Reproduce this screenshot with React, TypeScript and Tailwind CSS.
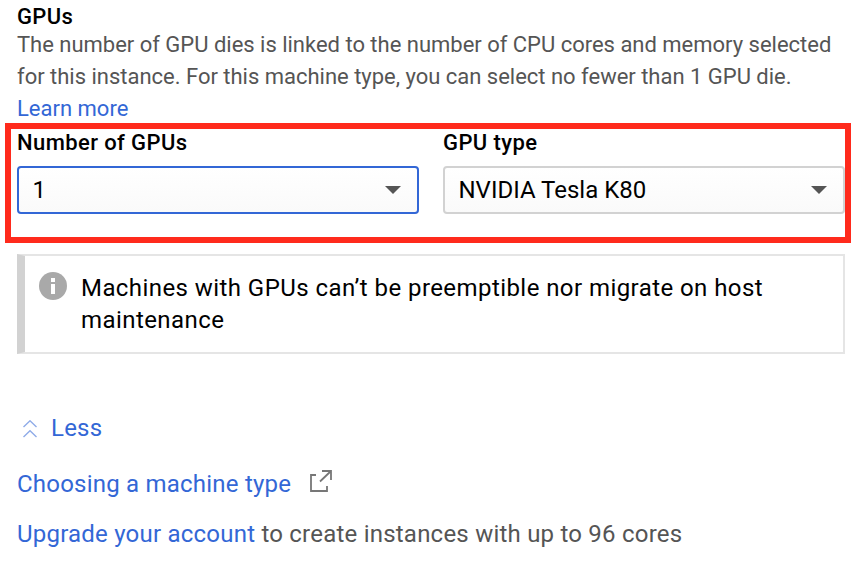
function Caret() {
  return (
    <svg width="16" height="8" viewBox="0 0 16 8" className="mr-[16px] shrink-0" aria-hidden="true">
      <path d="M0 0h16L8 8z" fill="#555" />
    </svg>
  );
}

function SelectField({ label, value, active }: { label: string; value: string; active?: boolean }) {
  return (
    <div className="w-[402px]">
      <div className="h-[37px] text-[22px] leading-[28px] font-medium tracking-[0.4px] whitespace-nowrap">{label}</div>
      <button
        type="button"
        className={
          "flex h-[48px] w-full items-center justify-between rounded-[4px] border-2 bg-gradient-to-b from-white to-[#fafafa] pl-[13.5px] text-[24px] leading-[32px] " +
          (active ? "border-[#3367d6]" : "border-[#d2d2d2]")
        }
      >
        <span>{value}</span>
        <Caret />
      </button>
    </div>
  );
}

export default function App() {
  return (
    <main className="h-[587px] w-[858px] overflow-hidden bg-white font-['Roboto',sans-serif] text-black">
      <section className="h-[123px] pt-px pl-[17px] text-[22px] leading-[32px] whitespace-nowrap">
        <h2 className="h-[28px] font-medium tracking-[0.38px]">GPUs</h2>
        <p className="tracking-[-0.012px] text-[#555]">
          The number of GPU dies is linked to the number of CPU cores and memory selected
          <br />
          for this instance. For this machine type, you can select no fewer than 1 GPU die.
        </p>
        <a className="text-[#3367d6]">Learn more</a>
      </section>

      <section className="ml-[5px] flex h-[120px] w-[846px] gap-[24px] border-6 border-[#ff2a1c] pl-[6px]">
        <SelectField label="Number of GPUs" value="1" active />
        <SelectField label="GPU type" value="NVIDIA Tesla K80" />
      </section>

      <section className="mt-[11px] ml-[17px] flex h-[100px] w-[828px] border-2 border-l-8 border-[#e5e5e5] border-l-[#d2d2d2] pt-[16px] pl-[14px]">
        <svg width="28" height="28" viewBox="0 0 28 28" className="shrink-0" aria-hidden="true">
          <circle cx="14" cy="14" r="14" fill="#a9a9a9" />
          <path d="M12 6h4v4h-4zM12 12h4v10h-4z" fill="#fff" />
        </svg>
        <p className="ml-[14px] text-[24px] leading-[32px] tracking-[0.43px] whitespace-nowrap">
          Machines with GPUs can’t be preemptible nor migrate on host
          <br />
          maintenance
        </p>
      </section>

      <section className="pt-[58px] pl-[17px] text-[24px] leading-[32px] tracking-[0.22px] whitespace-nowrap text-[#3367d6]">
        <div className="flex h-[56px]">
          <svg width="14" height="18" viewBox="0 0 14 18" className="mt-[8px] ml-[6px]" fill="none" stroke="#8fabe8" strokeWidth="1.4" aria-hidden="true">
            <path d="M.5 7 7 .8 13.5 7M.5 17 7 10.8l6.5 6.2" />
          </svg>
          <a className="ml-[14px]">Less</a>
        </div>
        <div className="flex h-[50px]">
          <a className="w-[293px]">Choosing a machine type</a>
          <svg width="22" height="22" viewBox="0 0 22 22" className="mt-[2px]" fill="none" stroke="#777" strokeWidth="1.8" aria-hidden="true">
            <path d="M6 5H1v16h16v-5M12 1h9v9M21 1 10 11.5" />
          </svg>
        </div>
        <p className="text-[#555]">
          <a className="text-[#3367d6]">Upgrade your account</a> to create instances with up to 96 cores
        </p>
      </section>
    </main>
  );
}
